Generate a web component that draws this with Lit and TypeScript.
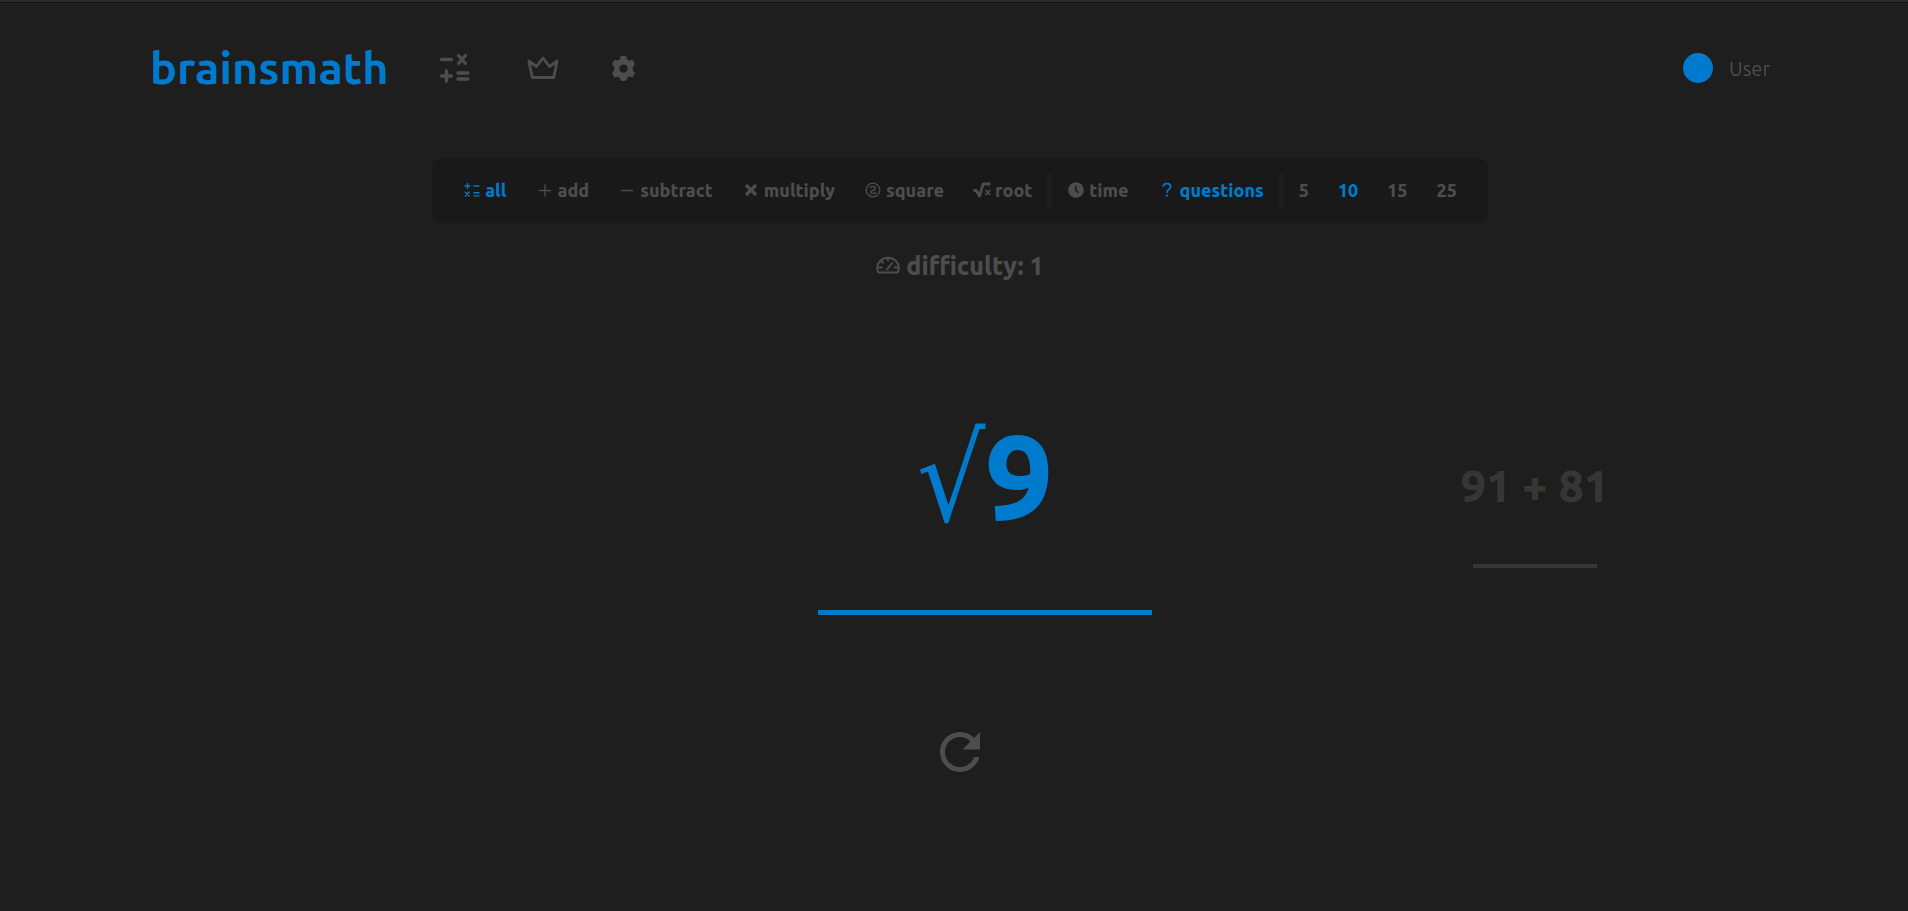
import { LitElement, html, css, svg, nothing } from "lit";
import { customElement, state } from "lit/decorators.js";
import { classMap } from "lit/directives/class-map.js";

const glyphs = {
  all: svg`<svg viewBox="-1 -1 18 18" width="18" height="18" fill="none" stroke="currentColor" stroke-width="1.4"><path d="M.5 4h6M3.5 1v6M9.5 4h6M1 9.8l4.600 4.600M5.600 9.800L1 14.400M9.500 10.700h6M9.500 13.900h6"/></svg>`,
  add: svg`<svg viewBox="-1 -1 18 18" width="18" height="18" fill="none" stroke="currentColor" stroke-width="1.3"><path d="M2 8.500h12M8 2.500v12"/></svg>`,
  subtract: svg`<svg viewBox="-1 -1 18 18" width="18" height="18" fill="none" stroke="currentColor" stroke-width="1.5"><path d="M2 8.500h12"/></svg>`,
  multiply: svg`<svg viewBox="-1 -1 18 18" width="18" height="18" fill="none" stroke="currentColor" stroke-width="3.2"><path d="M3 3l10 10M13 3L3 13"/></svg>`,
  square: svg`<svg viewBox="-1 -1 18 18" width="18" height="18" fill="none" stroke="currentColor" stroke-width="1.3"><circle cx="8" cy="8" r="6.8"/><path stroke-width="1.4" stroke-linejoin="round" d="M5.800 6.200V4.600h4.200v2.800L6 9.400v2h4.400V9.800"/></svg>`,
  root: svg`<svg viewBox="0 -1 18 18" width="18" height="18" fill="none" stroke="currentColor"><path stroke-width="2.8" stroke-linejoin="round" d="M.5 8.500h2.800L6.500 14l3.600-12h7.400"/><path stroke-width="1.7" d="M12.500 8l4.600 5M17.100 8l-4.600 5"/></svg>`,
  time: svg`<svg viewBox="-1 -1 18 18" width="18" height="18"><circle cx="8" cy="8" r="7.8" fill="currentColor"/><path class="hand" d="M7.800 3.500v4.700l2.800 2.600"/></svg>`,
  questions: svg`<svg viewBox="-1 -1 18 18" width="18" height="18" fill="none" stroke="currentColor" stroke-width="1.8"><path d="M4.200 4.800c.1-2 1.600-3.200 3.700-3.200s3.700 1.200 3.700 3.100c0 2.600-3.700 2.900-3.700 6"/><path d="M7.900 12.400v2.200"/></svg>`,
};

interface Option {
  id: string;
  icon?: unknown;
}

const operations: Option[] = [
  { id: "all", icon: glyphs.all },
  { id: "add", icon: glyphs.add },
  { id: "subtract", icon: glyphs.subtract },
  { id: "multiply", icon: glyphs.multiply },
  { id: "square", icon: glyphs.square },
  { id: "root", icon: glyphs.root },
];
const modes: Option[] = [
  { id: "time", icon: glyphs.time },
  { id: "questions", icon: glyphs.questions },
];
const counts: Option[] = [{ id: "5" }, { id: "10" }, { id: "15" }, { id: "25" }];

@customElement("app-root")
export class AppRoot extends LitElement {
  @state() private operation = "all";
  @state() private mode = "questions";
  @state() private count = "10";

  static styles = css`
    :host {
      --accent: #007acc;
      --muted: #4d4d4d;
      --faint: #363636;
      --page: #1e1e1e;
      --panel: #191919;
      display: block;
      box-sizing: border-box;
      min-height: 100vh;
      padding-left: 12px;
      border-top: 2px solid #2a2a30;
      background: var(--page);
      color: var(--muted);
      font-family: Ubuntu, "Noto Sans", sans-serif;
      box-shadow: inset 0 1px #101011;
    }
    svg {
      display: block;
      flex: none;
    }
    button {
      font: inherit;
      color: inherit;
      background: none;
      border: 0;
      padding: 0;
      cursor: pointer;
    }
    header {
      display: flex;
      align-items: center;
      height: 132px;
      padding: 0 138px;
    }
    .logo {
      color: var(--accent);
      font-size: 45px;
      font-weight: 600;
      line-height: 60px;
      text-decoration: none;
    }
    nav {
      display: flex;
      align-items: center;
      gap: 48px;
      margin-left: 46px;
    }
    nav a {
      color: inherit;
    }
    .user {
      display: flex;
      align-items: center;
      gap: 16px;
      margin-left: auto;
      font-size: 20px;
    }
    .avatar {
      width: 30px;
      height: 30px;
      border-radius: 50%;
      background: var(--accent);
    }
    main {
      display: flex;
      flex-direction: column;
      align-items: center;
    }
    .filters {
      display: flex;
      align-items: center;
      gap: 1px;
      height: 65px;
      margin-top: 24px;
      padding: 0 17px;
      border-radius: 10px;
      background: var(--panel);
      font-size: 18px;
      font-weight: 800;
    }
    .group {
      display: flex;
      gap: 1px;
    }
    .option {
      display: flex;
      align-items: center;
      gap: 4px;
      padding: 7px 14px 8px;
    }
    .option.on {
      color: var(--accent);
    }
    .hand {
      fill: none;
      stroke: var(--panel);
      stroke-width: 1.4;
    }
    .divider {
      width: 5px;
      height: 35px;
      border-radius: 3px;
      background: var(--page);
    }
    .difficulty {
      display: flex;
      align-items: center;
      gap: 6px;
      margin-top: 27px;
      font-size: 25px;
      font-weight: 800;
      line-height: 32px;
    }
    .board {
      display: grid;
      grid-template-columns: repeat(3, 1fr);
      align-items: center;
      align-self: stretch;
      height: 260px;
      margin-top: 99px;
      padding: 0 98px 0 148px;
    }
    .problem {
      display: flex;
      flex-direction: column;
      align-items: center;
      font-weight: 800;
    }
    .problem label {
      white-space: nowrap;
    }
    .problem input {
      box-sizing: border-box;
      padding: 0;
      border: 0;
      border-radius: 0;
      outline: none;
      background: none;
      color: inherit;
      font: inherit;
      text-align: center;
    }
    .current {
      grid-column: 2;
      color: var(--accent);
      font-size: 120px;
      line-height: 140px;
    }
    .current input {
      width: 334px;
      height: 65px;
      border-bottom: 5px solid;
      font-size: 48px;
    }
    .radical {
      font-family: "DejaVu Sans Condensed", "DejaVu Sans", sans-serif;
      font-weight: 400;
    }
    .next {
      color: var(--faint);
      font-size: 45px;
      line-height: 64px;
    }
    .next input {
      width: 124px;
      height: 50px;
      border-bottom: 4px solid;
      font-size: 24px;
    }
    .reload {
      margin-top: 81px;
    }
  `;

  private group(label: string, options: Option[], current: string, pick: (id: string) => void) {
    return html`<div class="group" role="group" aria-label=${label}>
      ${options.map(
        (o) => html`<button
          class=${classMap({ option: true, on: o.id === current })}
          aria-pressed=${o.id === current}
          @click=${() => pick(o.id)}
        >${o.icon ?? nothing}<span>${o.id}</span></button>`
      )}
    </div>`;
  }

  render() {
    return html`
      <header>
        <a class="logo" href="#">brainsmath</a>
        <nav>
          <a href="#play" aria-label="Play">
            <svg viewBox="0 0 40 40" width="40" height="40" fill="none" stroke="currentColor" stroke-width="3.4" stroke-linecap="round">
              <path d="M6.500 11.500h10M23.500 7.500l7 8M30.500 7.500l-7 8M6.500 28h10M11.500 23v10M23 25h10M23 31h10" />
            </svg>
          </a>
          <a href="#ranking" aria-label="Ranking">
            <svg viewBox="0 0 40 40" width="40" height="40" fill="none" stroke="currentColor" stroke-width="2.8" stroke-linejoin="round">
              <path d="M5.800 13l3.500 16.500h21.400L34.200 13l-7.700 5.500L20 10l-6.500 8.500z" />
            </svg>
          </a>
          <a href="#settings" aria-label="Settings">
            <svg viewBox="2 2 20 20" width="25" height="25" fill="currentColor">
              <path d="M12 2c.9 0 1.700.1 2.300.3l.7 2.400 1.500.9 2.500-.6c.9 1 1.700 2.300 2.200 3.600l-1.800 1.900v3l1.800 1.900c-.5 1.300-1.300 2.600-2.200 3.600l-2.500-.6-1.500.9-.7 2.300c-1.500.4-3.100.4-4.600 0L9 19.400l-1.500-.9-2.500.6c-.9-1-1.700-2.300-2.200-3.600l1.800-1.900v-3L2.800 8.600C3.300 7.300 4.100 6 5 5l2.500.6L9 4.700l.7-2.400C10.300 2.100 11.100 2 12 2zM12 8.700a3.300 3.300 0 1 0 0 6.600 3.300 3.300 0 0 0 0-6.600z" fill-rule="evenodd" />
            </svg>
          </a>
        </nav>
        <div class="user"><span class="avatar"></span><span>User</span></div>
      </header>
      <main>
        <div class="filters">
          ${this.group("Operation", operations, this.operation, (id) => (this.operation = id))}
          <span class="divider"></span>
          ${this.group("Mode", modes, this.mode, (id) => (this.mode = id))}
          <span class="divider"></span>
          ${this.group("Length", counts, this.count, (id) => (this.count = id))}
        </div>
        <button class="difficulty">
          <svg viewBox="0 1 24 24" width="24" height="24" fill="none" stroke="currentColor" stroke-width="2" stroke-linecap="round" stroke-linejoin="round">
            <path d="M2.500 19.500C1.500 18 1.200 16.500 1.200 15a10.800 10.300 0 0 1 21.600 0c0 1.500-.3 3-1.300 4.500z" />
            <path d="M11 16.500l5-6.500M12 5.500v2M5.500 8.500l1.500 1.300M3 14.500h2.500M18.500 14.500H21" />
          </svg>
          <span>difficulty: 1</span>
        </button>
        <section class="board">
          <div class="problem current">
            <label for="answer"><span class="radical">√</span>9</label>
            <input id="answer" type="text" autocomplete="off" />
          </div>
          <div class="problem next">
            <label for="upcoming">91 + 81</label>
            <input id="upcoming" type="text" disabled />
          </div>
        </section>
        <button class="reload" aria-label="Restart">
          <svg viewBox="0 0 24 24" width="60" height="60" fill="currentColor">
            <path d="M17.650 6.350C16.200 4.900 14.210 4 12 4c-4.420 0-7.990 3.580-7.990 8s3.570 8 7.990 8c3.730 0 6.840-2.550 7.730-6h-2.080c-.82 2.330-3.040 4-5.650 4-3.310 0-6-2.690-6-6s2.690-6 6-6c1.660 0 3.140.69 4.220 1.780L13 11h7V4l-2.350 2.350z" />
          </svg>
        </button>
      </main>
    `;
  }
}
